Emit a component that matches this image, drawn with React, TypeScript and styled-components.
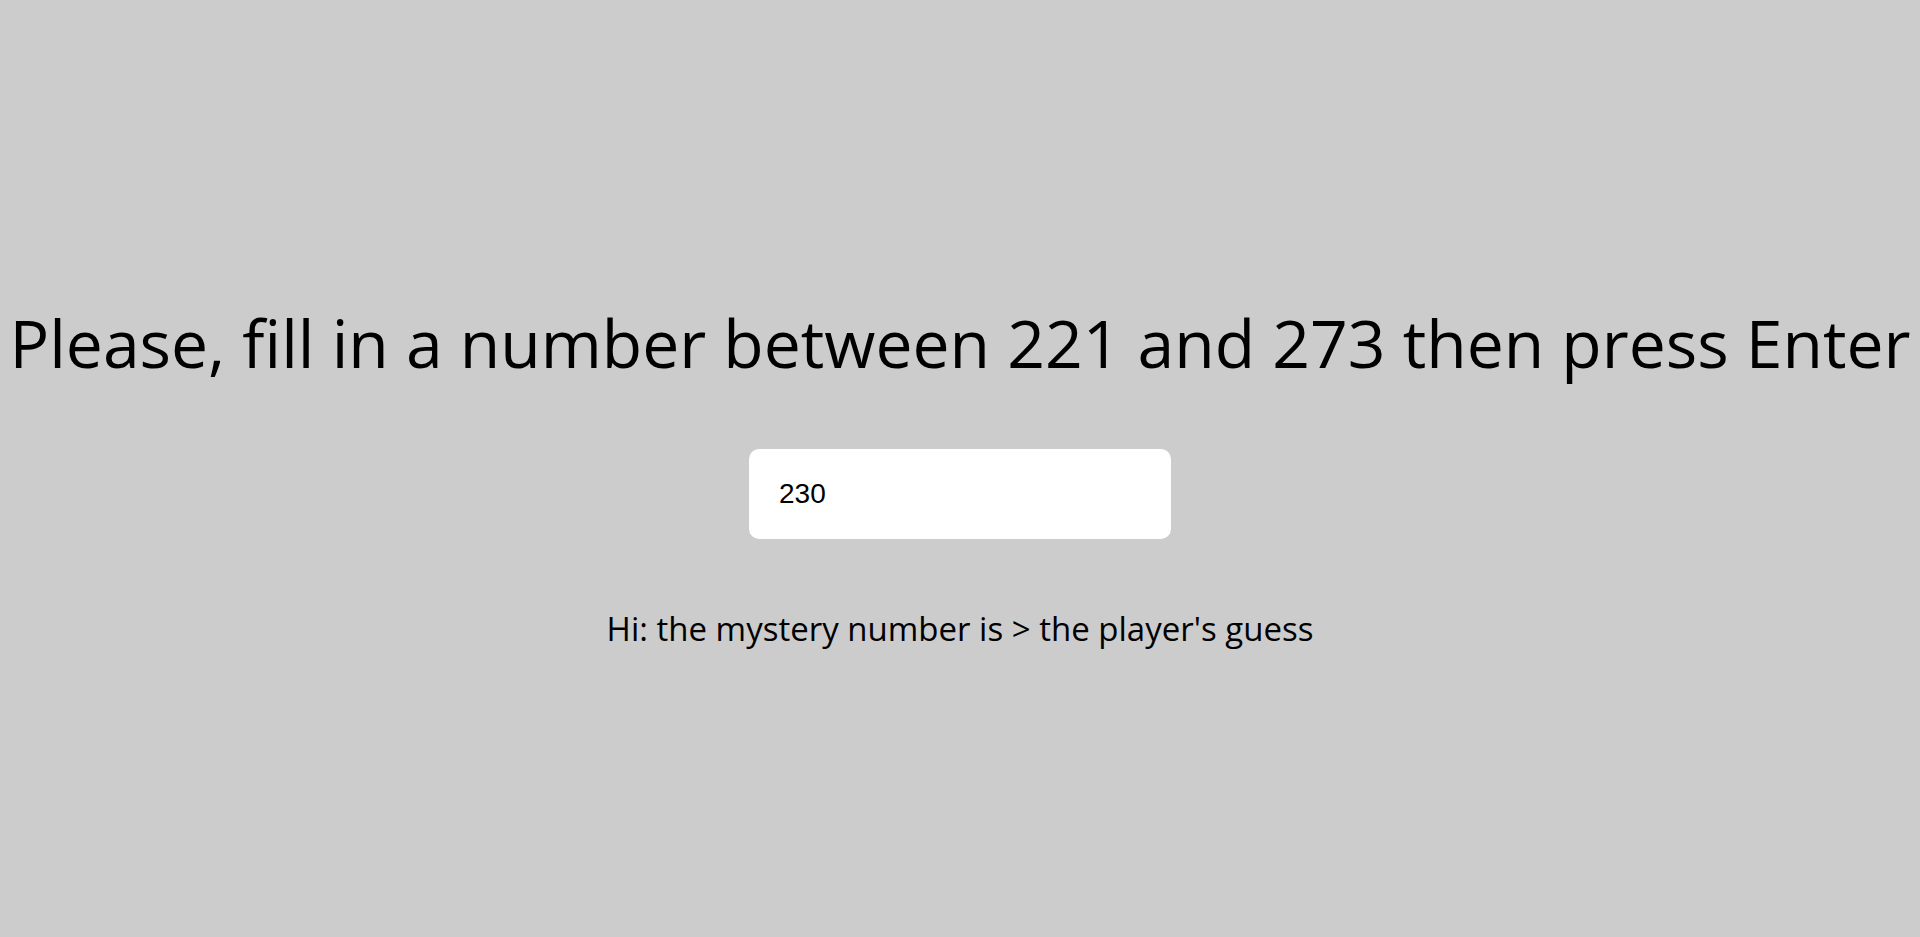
import React, { useState } from "react";
import styled, { createGlobalStyle } from "styled-components";

const GlobalStyle = createGlobalStyle`
  html, body {
    margin: 0;
    padding: 0;
    background: #cccccc;
  }
  body {
    font-family: "Open Sans", "Noto Sans", sans-serif;
    color: #000;
  }
`;

const Page = styled.main`
  min-height: 100vh;
  box-sizing: border-box;
  padding-top: 302px;
  display: flex;
  flex-direction: column;
  align-items: center;
`;

const Title = styled.h1`
  margin: 0;
  font-size: 66px;
  line-height: 80px;
  font-weight: 400;
  text-align: center;
  white-space: nowrap;
`;

const GuessInput = styled.input`
  margin-top: 67px;
  width: 422px;
  height: 90px;
  box-sizing: border-box;
  padding: 0 30px;
  border: none;
  border-radius: 10px;
  background: #fff;
  font-family: "Liberation Sans", Arial, sans-serif;
  font-size: 28px;
  color: #000;
  outline: none;
`;

const Hint = styled.p`
  margin: 70px 0 0;
  font-size: 33px;
  line-height: 40px;
  text-align: center;
`;

const min = 221;
const max = 273;
const mystery = 247;

export default function App() {
  const [value, setValue] = useState("230");
  const [guess, setGuess] = useState(230);

  const hint =
    mystery > guess
      ? "Hi: the mystery number is > the player's guess"
      : mystery < guess
      ? "Lo: the mystery number is < the player's guess"
      : "Found it!";

  return (
    <>
      <GlobalStyle />
      <Page>
        <Title>
          Please, fill in a number between {min} and {max} then press Enter
        </Title>
        <GuessInput
          type="text"
          value={value}
          onChange={(e) => setValue(e.target.value)}
          onKeyDown={(e) => {
            if (e.key === "Enter") setGuess(Number(value));
          }}
        />
        <Hint>{hint}</Hint>
      </Page>
    </>
  );
}
